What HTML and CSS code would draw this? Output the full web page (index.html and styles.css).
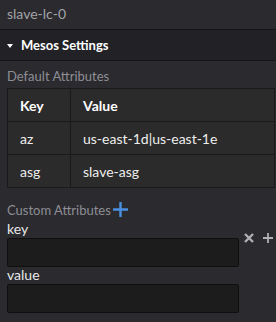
FILE: index.html
```html
<!DOCTYPE html>
<html>
<head>
<meta charset="utf-8">
<link rel="stylesheet" href="styles.css">
</head>
<body>
<div class="name">slave-lc-0</div>
<div class="section-head"><span class="caret"></span>Mesos Settings</div>
<div class="content">
  <div class="sub">Default Attributes</div>
  <table class="attrs">
    <tr><th class="c1">Key</th><th>Value</th></tr>
    <tr><td class="c1">az</td><td>us-east-1d|us-east-1e</td></tr>
    <tr><td class="c1">asg</td><td>slave-asg</td></tr>
  </table>
  <div class="sub custom">Custom Attributes<span class="add">
    <svg width="15" height="15" viewBox="0 0 15 15"><path d="M7.5 0v15M0 7.5h15" stroke="#4a8fe0" stroke-width="2.4"/></svg></span></div>
  <div class="pair">
    <div class="fields">
      <label>key</label>
      <div class="input"></div>
      <label>value</label>
      <div class="input"></div>
    </div>
    <div class="actions">
      <svg width="10" height="10" viewBox="0 0 10 10"><path d="M1 1L9 9M9 1L1 9" stroke="#b0b0b4" stroke-width="2.4"/></svg>
      <svg width="10" height="10" viewBox="0 0 10 10"><path d="M5 0v10M0 5h10" stroke="#b0b0b4" stroke-width="1.8"/></svg>
    </div>
  </div>
</div>
</body>
</html>
```
FILE: styles.css
```css
html, body {
  margin: 0;
  padding: 0;
  background: #2a2a2f;
  font-family: Lato, "Open Sans", sans-serif;
  width: 276px;
  height: 322px;
  overflow: hidden;
}
.name {
  height: 29px;
  line-height: 28px;
  padding-left: 7px;
  font-size: 14px;
  color: #a3a3a8;
  border-bottom: 1px solid #151518;
}
.section-head {
  height: 30px;
  line-height: 30px;
  background: #212126;
  border-bottom: 1px solid #151518;
  color: #ffffff;
  font-weight: bold;
  font-size: 13px;
  display: flex;
  align-items: center;
  padding-left: 7px;
}
.caret {
  width: 0;
  height: 0;
  border-left: 3.5px solid transparent;
  border-right: 3.5px solid transparent;
  border-top: 4px solid #fff;
  margin-right: 8px;
  margin-top: 1px;
}
.content {
  padding: 0 1px 0 7px;
}
.sub {
  font-size: 13px;
  color: #8e8e94;
  height: 27px;
  line-height: 30px;
}
table.attrs {
  width: 268px;
  border-collapse: collapse;
  background: #2b2b2b;
  font-size: 14px;
  color: #eeeeee;
}
.attrs th, .attrs td {
  border: 1px solid #1a1a1c;
  height: 32px;
  padding: 0 0 0 12px;
  text-align: left;
}
.attrs th { font-weight: bold; color: #fff; }
.attrs .c1 { width: 50px; }
.custom {
  margin-top: 10px;
  height: 24px;
  line-height: 24px;
  display: flex;
  align-items: center;
}
.add { display: flex; margin-left: 2px; margin-top: -2px; }
.pair { display: flex; }
.fields { width: 232px; }
label {
  display: block;
  font-size: 14px;
  color: #e8e8ea;
  height: 16px;
  line-height: 14px;
}
.input {
  height: 27px;
  background: #1c1c1c;
  border: 1px solid #0f0f10;
  border-radius: 2px;
  margin-bottom: 1px;
}
.actions {
  display: flex;
  gap: 9px;
  padding-left: 5px;
  padding-top: 11px;
  align-items: flex-start;
}
```
